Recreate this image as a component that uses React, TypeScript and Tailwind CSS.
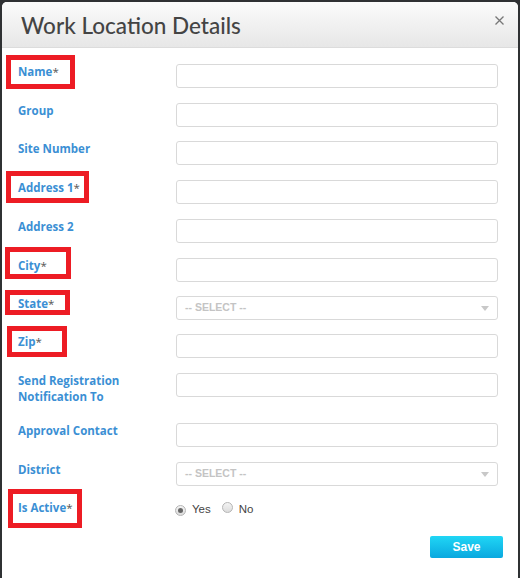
import React from "react";

const labelCls =
  "w-[158px] shrink-0 text-[11.5px] leading-[16px] font-bold text-[#3b8fd4]";

function Star() {
  return <span className="font-normal text-[#555]">*</span>;
}

function Input() {
  return (
    <div className="h-[24px] w-[322px] rounded-[3px] border border-[#d9d9d9] bg-white" />
  );
}

function Select() {
  return (
    <div className="h-[24px] w-[322px] rounded-[3px] border border-[#d9d9d9] bg-white flex items-center justify-between pl-[8px] pr-[8px]">
      <span
        className="text-[10.5px] font-bold text-[#c4c4c4]"
        style={{ fontFamily: '"Liberation Sans", Arial, sans-serif' }}
      >
        -- SELECT --
      </span>
      <svg width="8" height="5" viewBox="0 0 8 5">
        <path d="M0 0 L8 0 L4 5 Z" fill="#c8c8c8" />
      </svg>
    </div>
  );
}

function Row({
  label,
  children,
  className = "",
}: {
  label: React.ReactNode;
  children: React.ReactNode;
  className?: string;
}) {
  return (
    <div className={"flex items-start " + className}>
      <div className={labelCls} style={{ fontFamily: '"Open Sans", sans-serif' }}>
        {label}
      </div>
      {children}
    </div>
  );
}

function Radio({ checked }: { checked?: boolean }) {
  return (
    <span className="inline-flex h-[11px] w-[11px] items-center justify-center rounded-full border border-[#b5b5b5] bg-gradient-to-b from-[#f4f4f4] to-[#dcdcdc]">
      {checked && <span className="h-[5px] w-[5px] rounded-full bg-[#666]" />}
    </span>
  );
}

function RedBox({ x, y, w, h }: { x: number; y: number; w: number; h: number }) {
  return (
    <div
      className="absolute border-[5px] border-[#ed1c24] pointer-events-none"
      style={{ left: x, top: y, width: w, height: h }}
    />
  );
}

export default function App() {
  return (
    <div className="relative h-[578px] w-[520px] overflow-hidden bg-[#2f3133] px-[2px] pt-[2px]">
      <div className="h-full rounded-t-[5px] bg-white overflow-hidden">
        <div className="relative h-[46px] border-b border-[#dcdcdc] bg-gradient-to-b from-[#fbfbfb] to-[#e7e7e7] pl-[19px]">
          <div
            className="pt-[9px] text-[22.5px] leading-[30px] font-medium text-[#444]"
            style={{ fontFamily: "Lato, sans-serif" }}
          >
            Work Location Details
          </div>
          <svg
            className="absolute right-[14px] top-[14px]"
            width="9"
            height="9"
            viewBox="0 0 9 9"
          >
            <path d="M0.5 0.5 L8.5 8.5 M8.5 0.5 L0.5 8.5" stroke="#777" strokeWidth="1.3" />
          </svg>
        </div>
        <div className="flex flex-col pl-[16px] pt-[16px]">
          <Row label={<>Name<Star /></>}>
            <Input />
          </Row>
          <Row label="Group" className="mt-[15px]">
            <Input />
          </Row>
          <Row label="Site Number" className="mt-[14px]">
            <Input />
          </Row>
          <Row label={<>Address 1<Star /></>} className="mt-[15px]">
            <Input />
          </Row>
          <Row label="Address 2" className="mt-[15px]">
            <Input />
          </Row>
          <Row label={<>City<Star /></>} className="mt-[15px]">
            <Input />
          </Row>
          <Row label={<>State<Star /></>} className="mt-[14px]">
            <Select />
          </Row>
          <Row label={<>Zip<Star /></>} className="mt-[14px]">
            <Input />
          </Row>
          <Row label={<>Send Registration<br />Notification To</>} className="mt-[15px]">
            <Input />
          </Row>
          <Row label="Approval Contact" className="mt-[18px]">
            <Input />
          </Row>
          <Row label="District" className="mt-[15px]">
            <Select />
          </Row>
          <Row label={<>Is Active<Star /></>} className="mt-[14px]">
            <div
              className="flex items-center pt-[1px] text-[11.5px] leading-[16px] text-[#444]"
              style={{ fontFamily: '"Liberation Sans", Arial, sans-serif' }}
            >
              <span className="-ml-[1px]">
                <Radio checked />
              </span>
              <span className="ml-[6px]">Yes</span>
              <span className="ml-[11px]">
                <Radio />
              </span>
              <span className="ml-[6px]">No</span>
            </div>
          </Row>
          <div className="mt-[19px] flex justify-end pr-[15px]">
            <div
              className="flex h-[22px] w-[73px] items-center justify-center rounded-[2px] bg-gradient-to-b from-[#20d6f5] to-[#0aa8df] text-[12px] font-bold text-white"
              style={{ fontFamily: '"Liberation Sans", Arial, sans-serif' }}
            >
              Save
            </div>
          </div>
        </div>
      </div>
      <RedBox x={6} y={55} w={69} h={34} />
      <RedBox x={6} y={171} w={83} h={32} />
      <RedBox x={5} y={247} w={66} h={32} />
      <RedBox x={5} y={290} w={65} h={25} />
      <RedBox x={7} y={326} w={60} h={31} />
      <RedBox x={8} y={489} w={74} h={39} />
    </div>
  );
}
